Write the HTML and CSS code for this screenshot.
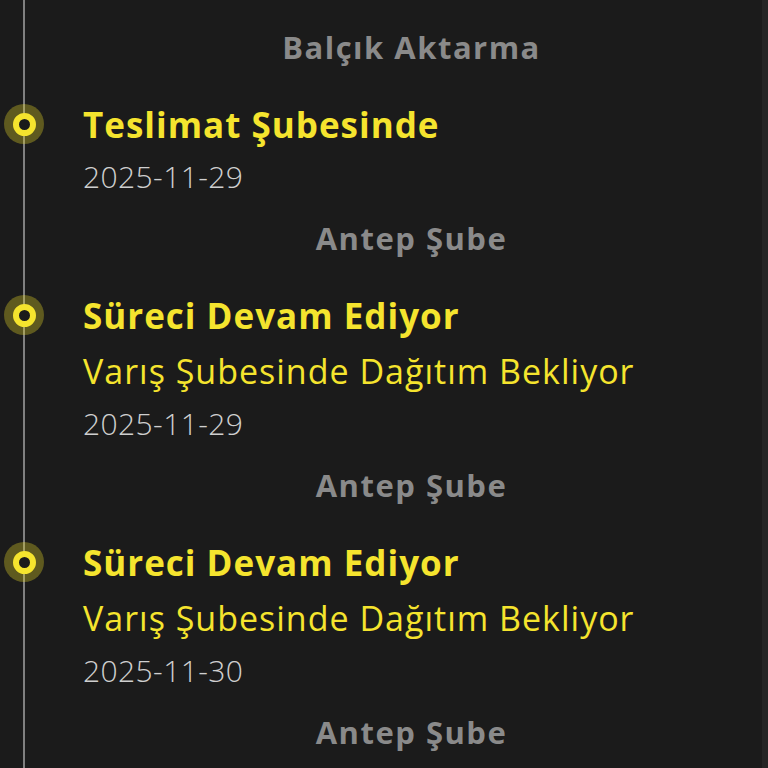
FILE: index.html
```html
<!DOCTYPE html>
<html>
<head>
  <meta charset="utf-8">
  <title>Kargo Takip</title>
  <link rel="stylesheet" href="styles.css">
</head>
<body>
  <div class="page">
    <div class="timeline">
      <div class="location">Balçık Aktarma</div>

      <div class="step">
        <span class="dot"></span>
        <div class="step-title">Teslimat Şubesinde</div>
        <div class="step-date">2025-11-29</div>
      </div>
      <div class="location">Antep Şube</div>

      <div class="step">
        <span class="dot"></span>
        <div class="step-title">Süreci Devam Ediyor</div>
        <div class="step-desc">Varış Şubesinde Dağıtım Bekliyor</div>
        <div class="step-date">2025-11-29</div>
      </div>
      <div class="location">Antep Şube</div>

      <div class="step">
        <span class="dot"></span>
        <div class="step-title">Süreci Devam Ediyor</div>
        <div class="step-desc">Varış Şubesinde Dağıtım Bekliyor</div>
        <div class="step-date">2025-11-30</div>
      </div>
      <div class="location">Antep Şube</div>
    </div>
    <div class="scroll-edge"></div>
  </div>
</body>
</html>
```

FILE: styles.css
```css
* {
  box-sizing: border-box;
}

html, body {
  margin: 0;
  height: 100%;
  background: #1b1b1b;
}

body {
  font-family: 'Open Sans', 'DejaVu Sans', sans-serif;
  color: #c8c8c8;
  overflow: hidden;
}

.page {
  display: flex;
  min-height: 100%;
}

.timeline {
  position: relative;
  flex: 1;
  padding: 25px 22px 0 83px;
}

/* vertical rail */
.timeline::before {
  content: '';
  position: absolute;
  left: 23px;
  top: 0;
  bottom: 0;
  width: 2px;
  background: #808080;
}

.scroll-edge {
  width: 6px;
  background: #252525;
}

.location {
  text-align: center;
  font-size: 31px;
  font-weight: 700;
  letter-spacing: 1.5px;
  color: #8a8a8a;
  line-height: 44px;
  margin-bottom: 29px;
}

.step {
  position: relative;
}

.dot {
  position: absolute;
  left: -79px;
  top: 6px;
  width: 40px;
  height: 40px;
  border-radius: 50%;
  background: rgba(240, 225, 40, 0.32);
  display: flex;
  align-items: center;
  justify-content: center;
}

.dot::after {
  content: '';
  width: 11px;
  height: 11px;
  border-radius: 50%;
  border: 6px solid #f5e42e;
  background: #1b1b1b;
}

.step-title {
  font-size: 35px;
  font-weight: 700;
  letter-spacing: 1px;
  color: #f5e42e;
  line-height: 54px;
}

.step-desc {
  font-size: 34px;
  font-weight: 500;
  letter-spacing: 1px;
  color: #f5e42e;
  line-height: 56px;
}

.step-date {
  font-size: 30px;
  font-weight: 300;
  letter-spacing: 0.4px;
  color: #cfcfcf;
  line-height: 50px;
  margin-bottom: 14px;
}
```
